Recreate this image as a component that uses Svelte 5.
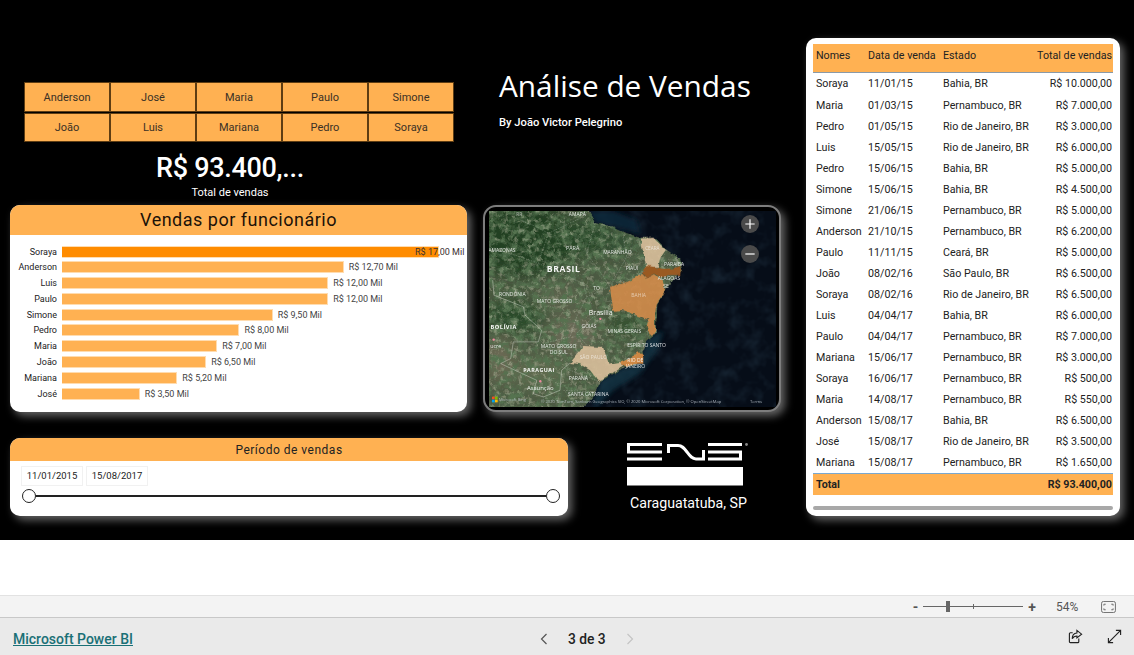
<script>
    const names = ['Anderson', 'José', 'Maria', 'Paulo', 'Simone', 'João', 'Luis', 'Mariana', 'Pedro', 'Soraya'];

    const bars = [
        { name: 'Soraya', value: 17, label: '17,00' },
        { name: 'Anderson', value: 12.7, label: '12,70' },
        { name: 'Luis', value: 12, label: '12,00' },
        { name: 'Paulo', value: 12, label: '12,00' },
        { name: 'Simone', value: 9.5, label: '9,50' },
        { name: 'Pedro', value: 8, label: '8,00' },
        { name: 'Maria', value: 7, label: '7,00' },
        { name: 'João', value: 6.5, label: '6,50' },
        { name: 'Mariana', value: 5.2, label: '5,20' },
        { name: 'José', value: 3.5, label: '3,50' }
    ];

    const sales = [
        ['Soraya', '11/01/15', 'Bahia, BR', 'R$ 10.000,00'],
        ['Maria', '01/03/15', 'Pernambuco, BR', 'R$ 7.000,00'],
        ['Pedro', '01/05/15', 'Rio de Janeiro, BR', 'R$ 3.000,00'],
        ['Luis', '15/05/15', 'Rio de Janeiro, BR', 'R$ 6.000,00'],
        ['Pedro', '15/06/15', 'Bahia, BR', 'R$ 5.000,00'],
        ['Simone', '15/06/15', 'Bahia, BR', 'R$ 4.500,00'],
        ['Simone', '21/06/15', 'Pernambuco, BR', 'R$ 5.000,00'],
        ['Anderson', '21/10/15', 'Pernambuco, BR', 'R$ 6.200,00'],
        ['Paulo', '11/11/15', 'Ceará, BR', 'R$ 5.000,00'],
        ['João', '08/02/16', 'São Paulo, BR', 'R$ 6.500,00'],
        ['Soraya', '08/02/16', 'Rio de Janeiro, BR', 'R$ 6.500,00'],
        ['Luis', '04/04/17', 'Bahia, BR', 'R$ 6.000,00'],
        ['Paulo', '04/04/17', 'Pernambuco, BR', 'R$ 7.000,00'],
        ['Mariana', '15/06/17', 'Pernambuco, BR', 'R$ 3.000,00'],
        ['Soraya', '16/06/17', 'Pernambuco, BR', 'R$ 500,00'],
        ['Maria', '14/08/17', 'Pernambuco, BR', 'R$ 550,00'],
        ['Anderson', '15/08/17', 'Bahia, BR', 'R$ 6.500,00'],
        ['José', '15/08/17', 'Rio de Janeiro, BR', 'R$ 3.500,00'],
        ['Mariana', '15/08/17', 'Pernambuco, BR', 'R$ 1.650,00']
    ];

    // px per thousand
    const scale = 22.18;

    // map labels, in the svg's own coordinates
    const mapLabels = [
        { x: 118, y: 47, t: 'RR', s: 15, a: 0.6 },
        { x: 292, y: 47, t: 'AMAPÁ', s: 15 },
        { x: 66, y: 157, t: 'AMAZONAS', s: 15 },
        { x: 278, y: 150, t: 'PARÁ', s: 16 },
        { x: 412, y: 163, t: 'MARANHÃO', s: 15 },
        { x: 517, y: 150, t: 'CEARÁ', s: 14, a: 0.6 },
        { x: 456, y: 209, t: 'PIAUÍ', s: 15 },
        { x: 582, y: 199, t: 'PARAÍBA', s: 15 },
        { x: 567, y: 241, t: 'ALAGOAS', s: 15 },
        { x: 558, y: 263, t: 'SE', s: 15 },
        { x: 350, y: 269, t: 'TO', s: 15 },
        { x: 476, y: 290, t: 'BAHIA', s: 15, a: 0.55 },
        { x: 97, y: 287, t: 'RONDÔNIA', s: 15 },
        { x: 224, y: 308, t: 'MATO GROSSO', s: 15 },
        { x: 327, y: 383, t: 'GOIÁS', s: 15 },
        { x: 433, y: 397, t: 'MINAS GERAIS', s: 15 },
        { x: 500, y: 439, t: 'ESPÍRITO SANTO', s: 15 },
        { x: 236, y: 443, t: 'MATO GROSSO', s: 15 },
        { x: 236, y: 461, t: 'DO SUL', s: 15 },
        { x: 340, y: 477, t: 'SÃO PAULO', s: 15, a: 0.6 },
        { x: 466, y: 485, t: 'RIO DE', s: 15 },
        { x: 466, y: 503, t: 'JANEIRO', s: 15 },
        { x: 295, y: 539, t: 'PARANÁ', s: 15 },
        { x: 325, y: 587, t: 'SANTA CATARINA', s: 15 },
        { x: 47, y: 442, t: 'ucre', s: 16, w: 400 }
    ];
</script>

<div class="page">
    <div class="canvas">
        <div class="left">
            <div class="top">
                <div class="summary">
                    <div class="slicer">
                        {#each names as n}
                            <div class="chip">{n}</div>
                        {/each}
                    </div>
                    <div class="kpi">R$ 93.400,...</div>
                    <div class="kpi-label">Total de vendas</div>
                </div>
                <div class="heading">
                    <h1>Análise de Vendas</h1>
                    <p>By João Victor Pelegrino</p>
                </div>
            </div>

            <div class="middle">
                <section class="card chart">
                    <h2>Vendas por funcionário</h2>
                    <div class="bars">
                        {#each bars as b, i}
                            <div class="bar-row">
                                <span class="bar-name">{b.name}</span>
                                <span class="bar" class:top-bar={i === 0} style="width: {b.value * scale}px"></span>
                                <span class="bar-label" class:inside={i === 0}>R$ {b.label} Mil</span>
                            </div>
                        {/each}
                    </div>
                </section>

                <section class="card map">
                    <svg class="map-svg" viewBox="27 33 861 587" preserveAspectRatio="none">
                        <defs>
                            <filter id="sat-dark" x="0" y="0" width="100%" height="100%">
                                <feTurbulence type="fractalNoise" baseFrequency="0.045" numOctaves="5" seed="11" />
                                <feColorMatrix values="0 0 0 0 0.09  0 0 0 0 0.17  0 0 0 0 0.08  3 0 0 0 -1.2" />
                            </filter>
                            <filter id="sat-light" x="0" y="0" width="100%" height="100%">
                                <feTurbulence type="fractalNoise" baseFrequency="0.07" numOctaves="4" seed="23" />
                                <feColorMatrix values="0 0 0 0 0.62  0 0 0 0 0.6  0 0 0 0 0.46  3.4 0 0 0 -1.75" />
                            </filter>
                            <filter id="sea" x="0" y="0" width="100%" height="100%">
                                <feTurbulence type="fractalNoise" baseFrequency="0.02" numOctaves="3" seed="4" />
                                <feColorMatrix values="0 0 0 0 0.04  0 0 0 0 0.09  0 0 0 0 0.14  0.7 0 0 0 -0.32" />
                            </filter>
                            <filter id="soft" x="-30%" y="-30%" width="160%" height="160%">
                                <feGaussianBlur stdDeviation="22" />
                            </filter>
                            <filter id="soft-sm" x="-30%" y="-30%" width="160%" height="160%">
                                <feGaussianBlur stdDeviation="7" />
                            </filter>
                            <!-- roughens the straight polygon edges so coast and states look traced -->
                            <filter id="rough" filterUnits="userSpaceOnUse" x="0" y="0" width="930" height="660">
                                <feTurbulence type="fractalNoise" baseFrequency="0.05" numOctaves="3" seed="7" result="n" />
                                <feDisplacementMap in="SourceGraphic" in2="n" scale="12" xChannelSelector="R" yChannelSelector="G" />
                            </filter>
                            <clipPath id="land">
                                <path d="M325 0 L325 33 L345 70 L400 80 L440 100 L480 112 L530 118 L560 150 L600 175 L606 210 L580 240 L555 272 L532 310 L527 400 L500 420 L492 450 L470 490 L420 510 L362 542 L340 590 L310 620 L300 660 L0 660 L0 0 Z" />
                            </clipPath>
                        </defs>

                        <rect x="27" y="33" width="861" height="587" fill="#060d18" />
                        <rect x="27" y="33" width="861" height="587" filter="url(#sea)" />
                        <path d="M325 33 L345 70 L400 80 L480 100 L470 60 L400 33 Z" fill="#0e2a3c" filter="url(#soft-sm)" opacity="0.8" />
                        <path d="M340 600 L362 542 L420 510 L470 490 L492 450 L500 420 L527 400 L550 395 L530 450 L480 520 L400 570 L350 620 Z" fill="#123a4c" filter="url(#soft-sm)" opacity="0.7" />

                        <g filter="url(#rough)">
                            <g clip-path="url(#land)">
                                <rect x="0" y="0" width="930" height="660" fill="#4c5a42" />
                                <g filter="url(#soft)">
                                    <ellipse cx="130" cy="120" rx="170" ry="110" fill="#213f22" />
                                    <ellipse cx="330" cy="110" rx="70" ry="60" fill="#2c4a2a" />
                                    <ellipse cx="100" cy="350" rx="90" ry="50" fill="#2c4c2a" />
                                    <ellipse cx="440" cy="375" rx="60" ry="30" fill="#33502f" />
                                    <ellipse cx="420" cy="130" rx="50" ry="30" fill="#2f4d31" />
                                    <ellipse cx="280" cy="400" rx="70" ry="60" fill="#6a6a56" />
                                    <ellipse cx="240" cy="290" rx="60" ry="30" fill="#5f6650" />
                                    <ellipse cx="180" cy="520" rx="80" ry="50" fill="#5e6a4f" />
                                    <ellipse cx="60" cy="480" rx="40" ry="70" fill="#6d6a55" />
                                </g>
                                <rect x="0" y="0" width="930" height="660" filter="url(#sat-dark)" />
                                <rect x="0" y="0" width="930" height="660" filter="url(#sat-light)" opacity="0.4" />
                            </g>
                        </g>

                        <!-- state and country borders -->
                        <g fill="none" stroke="#dfe4da" stroke-width="1.4" opacity="0.5">
                            <path d="M120 60 L170 80 L205 100 L175 190 L120 170 L27 140" stroke-dasharray="5 3" />
                            <path d="M205 100 L300 55 L325 33" stroke-dasharray="5 3" />
                            <path d="M345 70 L320 160 L385 250 L390 262" stroke-dasharray="5 3" />
                            <path d="M175 190 L310 250 L320 290 L290 350 L270 410 L190 430" stroke-dasharray="5 3" />
                            <path d="M320 290 L385 262" stroke-dasharray="5 3" />
                            <path d="M430 110 L440 170 L390 260" stroke-dasharray="5 3" />
                            <path d="M400 330 L340 350 L290 400 L320 435" stroke-dasharray="5 3" />
                            <path d="M245 500 L360 545" stroke-dasharray="5 3" />
                            <path d="M250 570 L340 575" stroke-dasharray="5 3" />
                        </g>
                        <path d="M38 240 L42 285 L130 320 L135 345 L185 390 L175 425 L100 425 L92 475 L62 490 L170 540 L160 580 L190 590 L240 570 L245 510 L270 488" fill="none" stroke="#e4e7dc" stroke-width="2.2" opacity="0.55" />

                        <!-- highlighted states -->
                        <g filter="url(#rough)">
                            <path d="M483 115 L520 113 L557 150 L540 175 L535 200 L500 205 L490 160 Z" fill="#d9bf9b" opacity="0.9" />
                            <path d="M270 488 L300 452 L310 437 L370 440 L385 490 L420 485 L430 495 L395 520 L355 542 L330 510 L300 492 Z" fill="#d9bf9b" opacity="0.9" />
                            <path d="M390 260 L430 250 L470 230 L490 225 L500 235 L525 222 L545 240 L555 272 L530 310 L525 340 L525 400 L510 405 L500 380 L505 358 L470 345 L430 330 L400 332 L395 300 Z" fill="#cf8a4a" opacity="0.92" />
                            <path d="M420 487 L460 470 L475 453 L490 470 L490 490 L465 490 L440 500 Z" fill="#d58a45" opacity="0.95" />
                            <path d="M490 220 L500 197 L520 200 L545 206 L575 205 L605 198 L600 225 L570 225 L545 232 L525 220 L500 235 Z" fill="#9a5a24" />
                        </g>

                        {#each mapLabels as l}
                            <text class="map-label" x={l.x} y={l.y} font-size={l.s} opacity={l.a ?? 0.85} font-weight={l.w ?? 500}>{l.t}</text>
                        {/each}
                        <text class="map-label strong" x="251" y="217" font-size="26" letter-spacing="2">BRASIL</text>
                        <text class="map-label strong" x="71" y="386" font-size="17" letter-spacing="1.5">BOLÍVIA</text>
                        <text class="map-label strong" x="177" y="516" font-size="16" letter-spacing="1.5">PARAGUAI</text>
                        <text class="map-label place" x="362" y="345" font-size="21">Brasília</text>
                        <text class="map-label place" x="181" y="569" font-size="18">Assunção</text>
                        <circle cx="361" cy="356" r="3.5" fill="#f08aa0" />
                        <circle cx="41" cy="418" r="3.5" fill="#f08aa0" />
                        <circle cx="181" cy="543" r="3.5" fill="#f08aa0" />

                        <!-- logo and attribution -->
                        <g>
                            <rect x="36" y="589" width="8" height="8" fill="#f25022" />
                            <rect x="45" y="589" width="8" height="8" fill="#7fba00" />
                            <rect x="36" y="598" width="8" height="8" fill="#00a4ef" />
                            <rect x="45" y="598" width="8" height="8" fill="#ffb900" />
                        </g>
                        <text class="attr" x="57" y="601" font-size="12">Microsoft Bing</text>
                        <text class="attr" x="183" y="608" font-size="12.4">© 2020 TomTom, Sanborn Geographics SIO, © 2020 Microsoft Corporation, © <tspan text-decoration="underline">OpenStreetMap</tspan></text>
                        <text class="attr" x="810" y="608" font-size="12.4" text-decoration="underline">Terms</text>
                    </svg>
                    <button class="zoom-btn plus" aria-label="Aproximar">
                        <svg viewBox="0 0 18 18"><path d="M9 2v14M2 9h14" /></svg>
                    </button>
                    <button class="zoom-btn minus" aria-label="Afastar">
                        <svg viewBox="0 0 18 18"><path d="M2 9h14" /></svg>
                    </button>
                </section>
            </div>

            <div class="bottom">
                <section class="card period">
                    <h3>Período de vendas</h3>
                    <div class="dates">
                        <span>11/01/2015</span>
                        <span>15/08/2017</span>
                    </div>
                    <div class="range">
                        <i class="handle"></i>
                        <i class="line"></i>
                        <i class="handle"></i>
                    </div>
                </section>

                <div class="brand">
                    <svg class="logo" viewBox="0 0 122 43">
                        <g fill="#fff">
                            <!-- E -->
                            <path d="M0 0h35v3H3v4.500h32v3H0zM0 14.500h35v3H0z" />
                            <!-- S -->
                            <path d="M81 0h34v3H81zM81 7.500h34v10H81v-3h31v-4H81z" />
                            <rect x="0" y="24" width="116" height="18.500" />
                        </g>
                        <!-- N -->
                        <path d="M41.500 10V2.500H51C55 2.500 57 5 60 9C63 13 65 16 69 16H76.500V7" fill="none" stroke="#fff" stroke-width="3" />
                        <circle cx="119.500" cy="1.500" r="1.400" fill="#888" />
                    </svg>
                    <span class="brand-city">Caraguatatuba, SP</span>
                </div>
            </div>
        </div>

        <section class="card sales">
            <table>
                <thead>
                    <tr>
                        <th class="c1">Nomes</th>
                        <th class="c2">Data de venda</th>
                        <th class="c3">Estado</th>
                        <th class="c4 num">Total de vendas</th>
                    </tr>
                </thead>
                <tbody>
                    {#each sales as row}
                        <tr>
                            <td>{row[0]}</td>
                            <td>{row[1]}</td>
                            <td>{row[2]}</td>
                            <td class="num">{row[3]}</td>
                        </tr>
                    {/each}
                </tbody>
                <tfoot>
                    <tr>
                        <td>Total</td>
                        <td></td>
                        <td></td>
                        <td class="num">R$ 93.400,00</td>
                    </tr>
                </tfoot>
            </table>
            <div class="scrollbar"></div>
        </section>
    </div>

    <div class="blank"></div>

    <div class="zoombar">
        <span class="zb-sign">-</span>
        <div class="zb-track"><i class="zb-thumb"></i><i class="zb-tick"></i></div>
        <span class="zb-sign">+</span>
        <span class="zb-pct">54%</span>
        <svg class="zb-fit" viewBox="0 0 16 13">
            <rect x="0.500" y="0.500" width="15" height="12" rx="2" />
            <path d="M3 5V3.500h2M11 3.500h2V5M13 8v1.500h-2M5 9.500H3V8" />
        </svg>
    </div>

    <footer>
        <a class="pbi" href="#top">Microsoft Power BI</a>
        <div class="pager">
            <svg class="chev" viewBox="0 0 8 12"><path d="M6.500 1 1.500 6l5 5" /></svg>
            <span>3 de 3</span>
            <svg class="chev off" viewBox="0 0 8 12"><path d="M1.500 1l5 5-5 5" /></svg>
        </div>
        <div class="actions">
            <svg class="share" viewBox="0 0 16 16">
                <path d="M11.500 10v3.500a1 1 0 0 1-1 1h-8a1 1 0 0 1-1-1V5a1 1 0 0 1 1-1H5" />
                <path d="M9.500 1.500l5 4-5 4V7.500c-2.500 0-4 1-5 3 0-3.500 2-6 5-6.200z" />
            </svg>
            <svg class="expand" viewBox="0 0 16 16">
                <path d="M9.500 1.500h5v5M14.500 1.500l-13 13M1.500 9.500v5h5" />
            </svg>
        </div>
    </footer>
</div>

<style>
    :global(body) {
        margin: 0;
        background: #fff;
        overflow: hidden;
    }

    .page {
        width: 1134px;
        height: 655px;
        display: flex;
        flex-direction: column;
        font-family: Roboto, "Open Sans", sans-serif;
        color: #111;
    }

    .canvas {
        height: 540px;
        background: #000;
        display: flex;
    }

    .left {
        width: 806px;
        display: flex;
        flex-direction: column;
    }

    .top {
        height: 205px;
        display: flex;
    }

    .summary {
        width: 499px;
        padding: 82px 0 0 24px;
        box-sizing: border-box;
    }

    .slicer {
        width: 430px;
        display: grid;
        grid-template-columns: repeat(5, 1fr);
        grid-auto-rows: 29.500px;
        gap: 1px 0;
        margin-bottom: 9px;
    }

    .chip {
        background: #ffb152;
        border: 1px solid #5e3d13;
        padding-top: 1px;
        box-sizing: border-box;
        display: flex;
        align-items: center;
        justify-content: center;
        font-size: 11px;
        color: #3a3025;
    }

    .kpi {
        width: 412px;
        text-align: center;
        font-family: Roboto, sans-serif;
        font-weight: 500;
        font-size: 27px;
        line-height: 34px;
        letter-spacing: -0.300px;
        color: #fff;
    }

    .kpi-label {
        width: 412px;
        text-align: center;
        font-size: 11px;
        line-height: 16px;
        color: #fff;
    }

    .heading {
        padding-top: 66px;
        color: #fff;
    }

    h1 {
        margin: 0;
        font-family: "Open Sans", sans-serif;
        font-weight: 400;
        font-size: 29.800px;
        line-height: 40px;
    }

    .heading p {
        margin: 9px 0 0;
        font-size: 11.200px;
        font-weight: 500;
        line-height: 16px;
    }

    .middle {
        height: 207px;
        display: flex;
        gap: 16px;
        padding-left: 10px;
    }

    .card {
        background: #fff;
        border-radius: 10px;
        box-sizing: border-box;
        box-shadow: 4px 4px 9px rgba(255, 255, 255, 0.4);
        overflow: hidden;
    }

    .chart {
        width: 457px;
    }

    h2 {
        margin: 0;
        height: 30px;
        background: #ffb152;
        text-align: center;
        font-family: Roboto, sans-serif;
        font-weight: 400;
        font-size: 18px;
        line-height: 30px;
        letter-spacing: 0.500px;
        color: #1c1208;
    }

    .bars {
        padding-top: 10px;
        display: flex;
        flex-direction: column;
        gap: 2.810px;
    }

    .bar-row {
        height: 13px;
        display: flex;
        align-items: center;
        font-size: 9px;
    }

    .bar-name {
        width: 47px;
        margin-right: 5px;
        text-align: right;
        color: #222;
    }

    .bar {
        height: 12px;
        background: #ffb152;
        border: 1px solid #ffdcb0;
        border-width: 1px 1px 1px 0;
        box-sizing: border-box;
    }

    .top-bar {
        background: #ff8c00;
    }

    .bar-label {
        margin-left: 5px;
        color: #444;
        white-space: nowrap;
    }

    .bar-label.inside {
        margin-left: -24px;
        color: #3a3030;
    }

    .map {
        position: relative;
        width: 298px;
        background: #000;
        border: 2px solid #7d7d7d;
        padding: 4px;
        border-radius: 13px;
    }

    .map-svg {
        display: block;
        width: 287px;
        height: 196px;
    }

    .map-label {
        fill: #fff;
        font-family: "Open Sans", sans-serif;
        text-anchor: middle;
    }

    .map-label.strong {
        font-weight: 700;
        opacity: 0.95;
    }

    .map-label.place {
        opacity: 0.9;
    }

    .attr {
        fill: #cfd6de;
        font-family: "Open Sans", sans-serif;
        opacity: 0.8;
    }

    .zoom-btn {
        position: absolute;
        left: 256px;
        width: 18px;
        height: 18px;
        padding: 0;
        border: none;
        border-radius: 50%;
        background: #4a4a4a;
    }

    .zoom-btn svg {
        display: block;
        width: 12px;
        height: 12px;
        margin: 3px;
        fill: none;
        stroke: #fff;
        stroke-width: 1.800;
    }

    .zoom-btn.plus {
        top: 8px;
    }

    .zoom-btn.minus {
        top: 38px;
    }

    .bottom {
        margin-top: 26px;
        padding-left: 10px;
        display: flex;
    }

    .period {
        width: 558px;
        height: 78px;
    }

    h3 {
        margin: 0;
        height: 23px;
        background: #ffb152;
        text-align: center;
        font-family: Roboto, sans-serif;
        font-weight: 400;
        font-size: 12px;
        line-height: 24px;
        letter-spacing: 0.500px;
        color: #222;
    }

    .dates {
        display: flex;
        gap: 3px;
        margin: 5px 0 0 11px;
    }

    .dates span {
        width: 62px;
        height: 20px;
        box-sizing: border-box;
        border: 1px solid #f1f1f1;
        text-align: center;
        font-size: 9.500px;
        line-height: 18px;
        color: #222;
    }

    .range {
        display: flex;
        align-items: center;
        margin: 3px 8px 0 12px;
    }

    .handle {
        width: 14px;
        height: 14px;
        flex: none;
        box-sizing: border-box;
        border: 1.500px solid #222;
        border-radius: 50%;
        background: #fff;
    }

    .line {
        flex: 1;
        height: 2px;
        background: #222;
    }

    .brand {
        margin-left: 59px;
        padding-top: 5px;
        display: flex;
        flex-direction: column;
        color: #fff;
    }

    .logo {
        display: block;
        width: 122px;
        height: 43px;
    }

    .brand-city {
        margin-top: 8px;
        margin-left: 3px;
        font-size: 14.200px;
        line-height: 18px;
    }

    .sales {
        margin: 38px 0 0 0;
        width: 314px;
        height: 478px;
        padding: 6px 7px 0;
        position: relative;
    }

    table {
        width: 300px;
        table-layout: fixed;
        border-collapse: collapse;
        font-size: 10.700px;
        line-height: 14px;
        color: #222;
    }

    th {
        height: 28px;
        box-sizing: border-box;
        background: #ffb152;
        border-bottom: 1px solid #8a9aa8;
        font-weight: 400;
        text-align: left;
        padding: 0 1px 4px 3px;
        vertical-align: middle;
        white-space: nowrap;
    }

    .c1 { width: 52px; }
    .c2 { width: 75px; }
    .c3 { width: 88px; }

    td {
        height: 21.060px;
        box-sizing: border-box;
        padding: 0 1px 0 3px;
        white-space: nowrap;
    }

    tbody tr:first-child td {
        height: 23px;
        padding-top: 1px;
    }

    .num {
        text-align: right;
    }

    tfoot td {
        height: 21px;
        background: #ffb152;
        border-top: 1px solid #79a8d0;
        font-weight: 700;
    }

    .scrollbar {
        height: 4px;
        margin-top: 11px;
        border-radius: 2px;
        background: #a8a8a8;
    }

    .blank {
        height: 55px;
    }

    .zoombar {
        height: 23px;
        box-sizing: border-box;
        background: #f3f3f3;
        border-top: 1px solid #e2e2e2;
        border-bottom: 1px solid #c8c8c8;
        display: flex;
        align-items: center;
        justify-content: flex-end;
        padding-right: 18px;
        color: #555;
    }

    .zb-sign {
        font-size: 14px;
        font-weight: 700;
        line-height: 14px;
    }

    .zb-track {
        position: relative;
        width: 100px;
        height: 1px;
        margin: 0 5px;
        background: #666;
    }

    .zb-thumb {
        position: absolute;
        left: 23px;
        top: -5px;
        width: 4px;
        height: 11px;
        background: #666;
    }

    .zb-tick {
        position: absolute;
        left: 50px;
        top: -2px;
        width: 1px;
        height: 5px;
        background: #666;
    }

    .zb-pct {
        margin-left: 20px;
        width: 22px;
        font-size: 12px;
    }

    .zb-fit {
        width: 15px;
        height: 12px;
        margin-left: 23px;
        fill: none;
        stroke: #666;
    }

    footer {
        flex: 1;
        background: #eaeaea;
        display: flex;
        align-items: center;
        position: relative;
        padding: 4px 13px 0;
    }

    .pbi {
        font-size: 14px;
        font-weight: 500;
        color: #1a7076;
    }

    .pager {
        position: absolute;
        left: 540px;
        display: flex;
        align-items: center;
        font-size: 13.800px;
        font-weight: 500;
        color: #222;
    }

    .pager span {
        margin: 0 20px;
    }

    .chev {
        width: 8px;
        height: 12px;
        fill: none;
        stroke: #555;
        stroke-width: 1.200;
    }

    .chev.off {
        stroke: #c4c4c4;
    }

    .actions {
        margin-left: auto;
        display: flex;
        gap: 24px;
        margin-right: -1px;
        margin-top: -4px;
    }

    .actions svg {
        width: 15px;
        height: 15px;
        fill: none;
        stroke: #222;
        stroke-width: 1.200;
    }
</style>
